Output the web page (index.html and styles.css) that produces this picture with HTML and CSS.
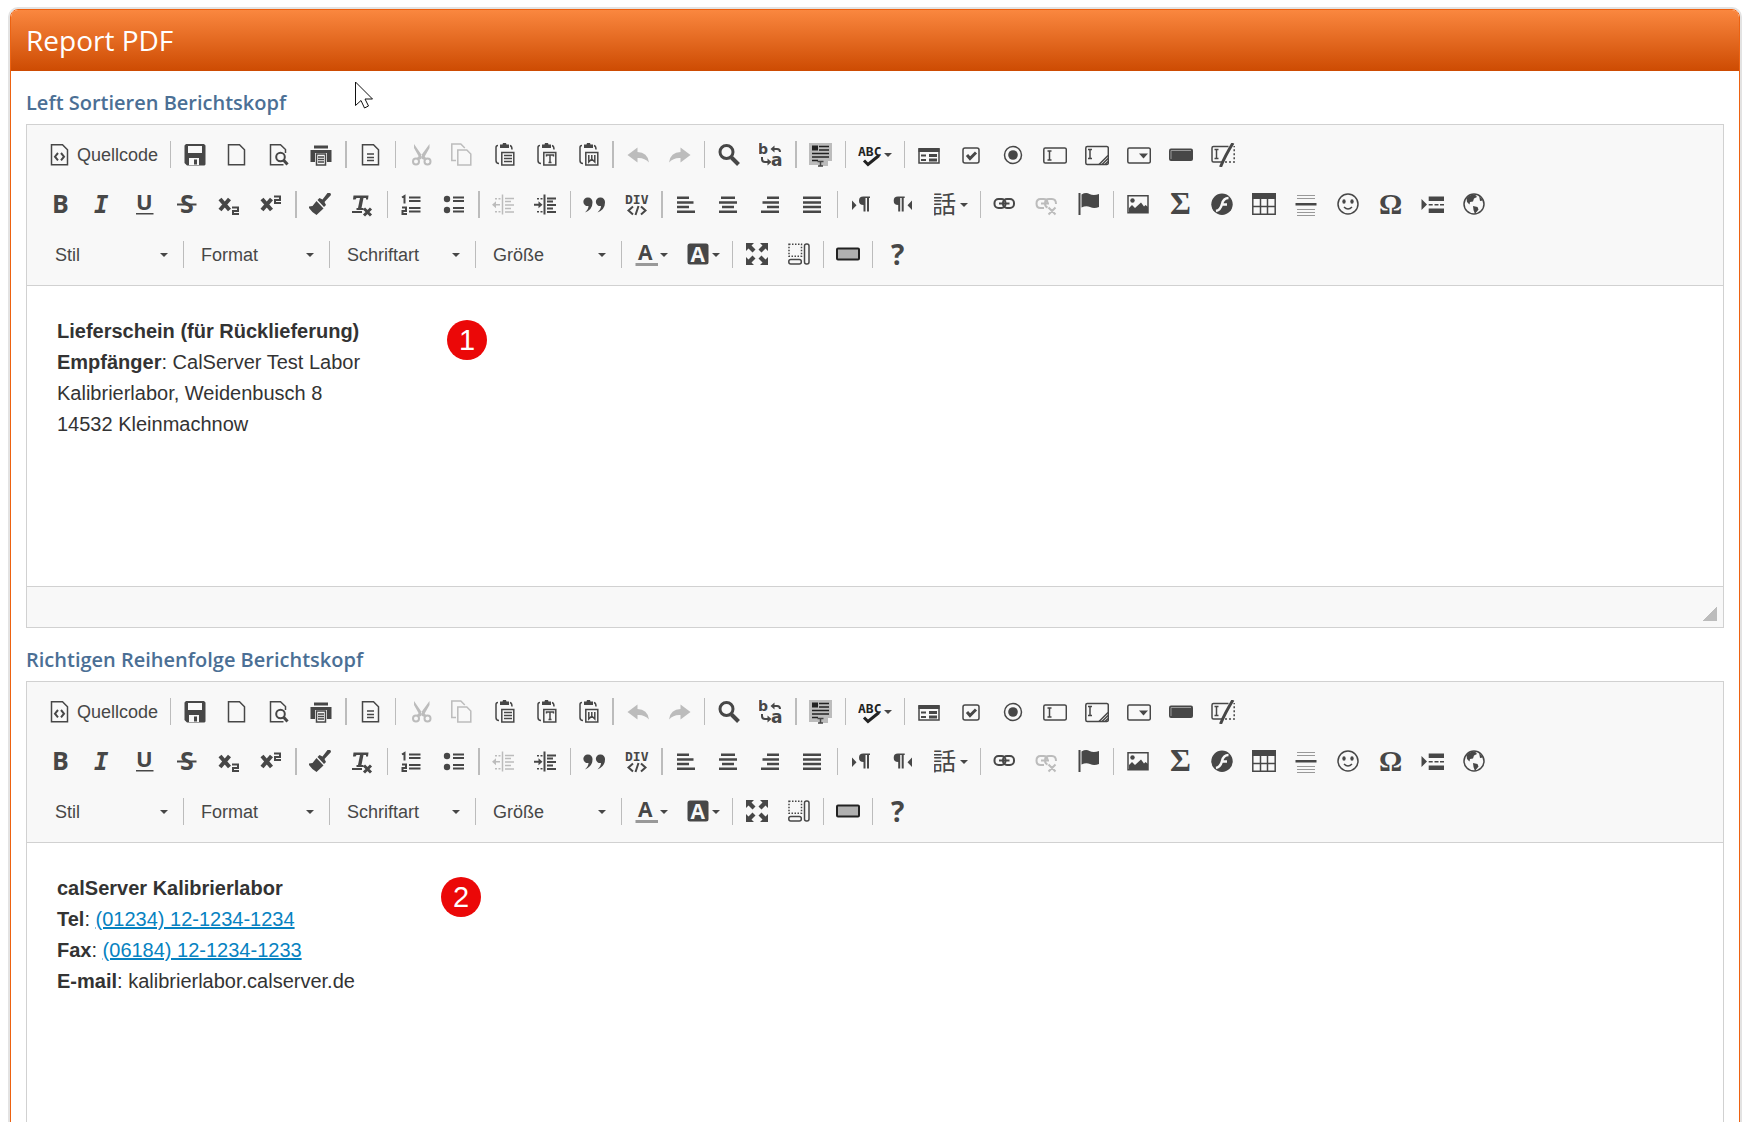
FILE: index.html
```html
<!DOCTYPE html>
<html lang="de">
<head>
    <meta charset="UTF-8">
    <meta name="viewport" content="width=device-width, initial-scale=1">
    <title>Report PDF</title>
    <link rel="stylesheet" href="styles.css">
</head>
<body>

    <!-- Icon sprite for the editor toolbar -->
    <svg class="sprite" aria-hidden="true">
        <symbol id="i-source" viewBox="0 0 24 24"><path class="line" d="M2.5 1.8h11l5 5v15h-16z"/><path class="line2" d="M9 10l-3 3.7 3 3.7M12 10l3 3.7-3 3.7"/></symbol>
        <symbol id="i-save" viewBox="0 0 24 24"><path fill-rule="evenodd" d="M3 1h18l1.5 1.5v19l-1 1H4l-2.5-2.5V2.5zM5 3v7h14V3zM6 15v7h10v-7z"/><path d="M11 16.5h3v5h-3z"/></symbol>
        <symbol id="i-new" viewBox="0 0 24 24"><path class="line" d="M3.5 1.8h11l5 5v15h-16z"/></symbol>
        <symbol id="i-preview" viewBox="0 0 24 24"><path class="line" d="M18.5 10V6.5l-5-4.7h-10v20h13"/><circle class="line2" cx="13.5" cy="14" r="4.3"/><path class="line3" d="M16.5 17l4 4.5"/></symbol>
        <symbol id="i-print" viewBox="0 0 24 24"><path d="M5 2.5h14v3H5zM1.5 7h21v12H18v-9H6v9H1.5z"/><path class="line" d="M7.5 11h9v11h-9zM9 14h6M9 16.5h6M9 19h6"/></symbol>
        <symbol id="i-templates" viewBox="0 0 24 24"><path class="line" d="M3.5 1.8h11l5 5v15h-16zM8 11h7M8 14.5h7M8 17.5h7"/></symbol>
        <symbol id="i-cut" viewBox="0 0 24 24"><path d="M6 1l9 13-2.5 2.5L6 5zM21.5 1l-9.500 13 3 2.5L21.5 5z"/><circle class="line2" cx="8" cy="18.5" r="3"/><circle class="line2" cx="19.5" cy="18.5" r="3"/><path class="line3" d="M10 16l3-3M17 16l-3-3"/></symbol>
        <symbol id="i-copy" viewBox="0 0 24 24"><path class="line" d="M6 17.5H1.8V1h9l4 4M7.8 7h9l4 4v11h-13z"/></symbol>
        <symbol id="i-paste" viewBox="0 0 24 24"><path class="line" d="M6 2.5q-2 0-2 2v13q0 3 3 3M18 2.5q2 .5 2 4"/><path d="M8 1.5h2.5L11 0h3l.5 1.5H17V5H8z"/><path class="line" d="M9.8 9.5h12v12.500h-12z"/><path class="line" d="M12 12.5h8M12 15.5h8M12 18.5h8"/></symbol>
        <symbol id="i-pastetext" viewBox="0 0 24 24"><path class="line" d="M6 2.5q-2 0-2 2v13q0 3 3 3M18 2.5q2 .5 2 4"/><path d="M8 1.5h2.5L11 0h3l.5 1.5H17V5H8z"/><path class="line" d="M9.8 9.5h12v12.5h-12z"/><path class="line" d="M12.5 13.5V12h7v1.5M16 12v7.5M14.5 19.5h3"/></symbol>
        <symbol id="i-pasteword" viewBox="0 0 24 24"><path class="line" d="M6 2.5q-2 0-2 2v13q0 3 3 3M18 2.5q2 .5 2 4"/><path d="M8 1.5h2.5L11 0h3l.5 1.5H17V5H8z"/><path class="line" d="M9.8 9.5h12v12.5h-12z"/><path class="line" d="M12.8 12v7l3-3 3 3v-7M15.8 12v4"/></symbol>
        <symbol id="i-undo" viewBox="0 0 24 24"><path d="M1.5 12L11.5 4.5V9q10 0 11.5 10.5-4.5-5-11.5-4.5v4.5z"/></symbol>
        <symbol id="i-redo" viewBox="0 0 24 24"><path d="M22.5 12L12.5 4.5V9Q2.5 9 1 19.5 5.5 14.5 12.5 15v4.5z"/></symbol>
        <symbol id="i-find" viewBox="0 0 24 24"><circle class="line3" cx="9.5" cy="9" r="6.5"/><path class="line4" d="M14.5 14.5l7 7"/></symbol>
        <symbol id="i-replace" viewBox="0 0 24 24"><text class="dv" x="-1" y="11" font-size="14" font-weight="bold">b</text><text class="dv" x="12" y="23" font-size="17" font-weight="bold">a</text><path class="line2" d="M14 6h4q3 0 3 3M3 14v2q0 3 3 3h3"/><path d="M11.5 6l4-3.5v7zM12.5 19l-4-3.5v7z"/></symbol>
        <symbol id="i-selectall" viewBox="0 0 24 24"><path fill="#bcbcbc" d="M0 0h23v18h-4v5h-9v-1H0z"/><path class="ink" d="M3 2.5h6v5H3z"/><path class="line dark" d="M10 3.5h10M10 7h10M3 10.5h17M3 14h17M3 17.5h6"/><path class="line" d="M8.5 18.5h6M11.5 18.5v4.5M9 23h5"/></symbol>
        <symbol id="i-spell" viewBox="0 0 24 24"><text class="mono bold ink" x="0" y="13" font-size="13">ABC</text><path class="line3 dark" d="M6 17.5l4 4 11-9"/></symbol>
        <symbol id="i-form" viewBox="0 0 24 24"><path class="line" d="M2 6h20v14H2z"/><path d="M1.500 5h21v4h-21zM12 11h8v3h-8zM12 15.5h8v3h-8z"/><path class="line2" d="M4 12.5h5M4 17h5"/></symbol>
        <symbol id="i-checkbox" viewBox="0 0 24 24"><rect class="line" x="4" y="5" width="16" height="15" rx="2"/><path class="line3" d="M8 12l3 3.5 6-6"/></symbol>
        <symbol id="i-radio" viewBox="0 0 24 24"><circle class="line" cx="12" cy="12" r="8.5"/><circle cx="12" cy="12" r="4.8"/></symbol>
        <symbol id="i-textfield" viewBox="0 0 24 24"><rect class="line" x=".8" y="5" width="22.5" height="15" rx="1.5"/><path class="line" d="M4.5 8h4M6.5 8v9M4.5 17h4"/></symbol>
        <symbol id="i-textarea" viewBox="0 0 24 24"><rect class="line" x=".8" y="3.5" width="22.5" height="18" rx="1.5"/><path class="line" d="M3 6.5h4M5 6.5v9M3 15.5h4M14 21.5l9-9M17 21.5l6-6M20 21.5l3-3"/></symbol>
        <symbol id="i-select" viewBox="0 0 24 24"><rect class="line" x=".8" y="5" width="22.5" height="15" rx="1.5"/><path d="M12 10.5h9l-4.5 5z"/></symbol>
        <symbol id="i-button" viewBox="0 0 24 24"><rect y="5.5" width="24" height="12.5" rx="2"/><path stroke="#999" fill="none" d="M2 16V7.5h20"/></symbol>
        <symbol id="i-hidden" viewBox="0 0 24 24"><path class="line" d="M12 19H2.5Q1 19 1 17.5V5q0-1.500 1.5-1.5h15"/><path class="line" d="M3.5 6.5h4M5.5 6.5v9M3.5 15.5h4"/><path class="line3" d="M9.5 24Q14 13 22 0"/><path class="line" stroke-dasharray="2 2" d="M14 19h9.2V3"/></symbol>

        <symbol id="i-bold" viewBox="0 0 24 24"><text class="os" x="3" y="20" font-size="25">B</text></symbol>
        <symbol id="i-italic" viewBox="0 0 24 24"><text class="mono bold" x="3" y="20" font-size="24" font-style="italic">I</text></symbol>
        <symbol id="i-underline" viewBox="0 0 24 24"><text class="os" x="3" y="17" font-size="22">U</text><path d="M3 20h17.500v1.500H3z"/></symbol>
        <symbol id="i-strike" viewBox="0 0 24 24"><text class="os" x="5" y="20" font-size="25">S</text><path d="M2 10.5h19.5v2H2z"/></symbol>
        <symbol id="i-sub" viewBox="0 0 24 24"><path class="line4" d="M3 6l9.5 11M12.5 6L3 17"/><path class="line2" d="M15 14.5h6V18h-5v3h6"/></symbol>
        <symbol id="i-sup" viewBox="0 0 24 24"><path class="line4" d="M3 6l9.5 11M12.5 6L3 17"/><path class="line2" d="M15 3.5h6V7h-5v3h6"/></symbol>
        <symbol id="i-copyformat" viewBox="0 0 24 24"><path d="M-1 13.5l4.500-.5L7.500 8l7 7.500-7 6.500q-5-2.500-8.500-8.500z"/><path d="M8.500 7l2-2 3 1.500L18.500 0q3-1.500 3.500 2L15.500 9l1.500 3-2 2z"/></symbol>
        <symbol id="i-removeformat" viewBox="0 0 24 24"><path d="M2.500 2.500h15l-.5 4h-2V5h-2.500l-2 10h2v2H5.500v-2h1.500L9 5H5.500L4.500 6.500H2z"/><path d="M1 18h10v2H1z"/><path class="line3" d="M13 15.5l7 7M20 15.5l-7 7"/></symbol>
        <symbol id="i-ol" viewBox="0 0 24 24"><path class="line2" d="M2 4.5L4.5 3v7.5M2 14.5h4V18H2.500v3H7M9 4.5h11.5M9 8h11.5M9 15h11.5M9 18.5h11.5"/></symbol>
        <symbol id="i-ul" viewBox="0 0 24 24"><circle cx="5" cy="6" r="3.2"/><circle cx="5" cy="17" r="3.2"/><path class="line2" d="M11 4.5h11M11 8h11M11 15h11M11 18.5h11"/></symbol>
        <symbol id="i-outdent" viewBox="0 0 24 24"><path class="line" d="M10.5 1.5v20M13 5.5h9M13 8.5h6M13 12h9M13 15.5h6M13 19h9M2 11.7h6"/><path d="M0 11.7l4-3.5v7zM3 5h2v1.5H3zM6.5 5h2v1.5h-2zM3 18h2v1.5H3zM6.5 18h2v1.5h-2z"/></symbol>
        <symbol id="i-indent" viewBox="0 0 24 24"><path class="line2" d="M10.5 1.5v20"/><path class="line2" d="M13 5.5h9M13 8.5h6M13 12h9M13 15.5h6M13 19h9M0 11.7h6"/><path d="M8.5 11.7l-4-3.5v7zM3 5h2v1.5H3zM6.5 5h2v1.5h-2zM3 18h2v1.5H3zM6.5 18h2v1.5h-2z"/></symbol>
        <symbol id="i-quote" viewBox="0 0 24 24"><path d="M5 4.5a4.500 4.500 0 0 1 4.500 5q0 7-7.500 10 3.500-3.500 3.500-6.500a4.300 4.300 0 1 1-.5-8.500zM17.500 4.500a4.500 4.500 0 0 1 4.500 5q0 7-7.500 10 3.500-3.500 3.500-6.500a4.300 4.300 0 1 1-.5-8.500z"/></symbol>
        <symbol id="i-div" viewBox="0 0 24 24"><text class="mono bold" x="0" y="10.5" font-size="13">DIV</text><path class="line2" d="M8 13.5l-4.5 4 4.5 4M16 13.5l4.5 4-4.5 4M13.5 13l-3 9"/></symbol>
        <symbol id="i-left" viewBox="0 0 24 24"><path d="M2 3.5h12V6H2zM2 8.2h16.500v2.500H2zM2 12.700h12v2.500H2zM2 17.500h18V20H2z"/></symbol>
        <symbol id="i-center" viewBox="0 0 24 24"><path d="M4 3.5h14V6H4zM2 8.2h18v2.500H2zM5 12.700h12v2.500H5zM2 17.500h18V20H2z"/></symbol>
        <symbol id="i-right" viewBox="0 0 24 24"><path d="M8 3.5h12V6H8zM3.500 8.200H20v2.500H3.500zM8 12.700h12v2.500H8zM2 17.500h18V20H2z"/></symbol>
        <symbol id="i-justify" viewBox="0 0 24 24"><path d="M2 3.5h18V6H2zM2 8.2h18v2.500H2zM2 12.700h18v2.500H2zM2 17.500h18V20H2z"/></symbol>
        <symbol id="i-ltr" viewBox="0 0 24 24"><path d="M2 7.5l4.5 4.7L2 17z"/><path d="M20 3.5V5h-1v13.5h-2V5h-1.5v13.5h-2V12Q9 12 9 7.7t4.5-4.2z"/></symbol>
        <symbol id="i-rtl" viewBox="0 0 24 24"><path d="M20 7.5l-4.5 4.7L20 17z"/><path d="M12.7 3.5V5h-1v13.5h-2V5H8.2v13.5h-2V12q-4.5 0-4.5-4.3t4.5-4.2z"/></symbol>
        <symbol id="i-lang" viewBox="0 0 24 24"><text class="cjk" x="-2" y="20" font-size="24">話</text></symbol>
        <symbol id="i-link" viewBox="0 0 24 24"><rect class="line2" x="1.5" y="6" width="11" height="9" rx="4"/><rect class="line2" x="10" y="6" width="11" height="9" rx="4"/><path class="line2" d="M6 10.5h10.5"/></symbol>
        <symbol id="i-unlink" viewBox="0 0 24 24"><path class="line2" d="M9 15H5.5q-4 0-4-4.5T5.5 6h3q4 0 4 4.5M12.5 14.5q-2.5-1-2.5-4Q10 6 14 6h3q4 0 4 5M6 10.5h8M13.5 14.5l7 7M20.5 14.5l-7 7"/></symbol>
        <symbol id="i-anchor" viewBox="0 0 24 24"><path d="M1.5 0h2v22h-2zM4.5 1.5Q9-1 12.5 1q4 2 9.5 0v13q-5 2-9 0-4-1.5-8.5.5z"/></symbol>
        <symbol id="i-image" viewBox="0 0 24 24"><path class="line" d="M2 2.8h20v17H2z"/><circle cx="6.5" cy="7.5" r="2.2"/><path d="M3 19v-4l3-3 3 3 6-5.5 3 4 1.5-1.5L22 14v5z"/></symbol>
        <symbol id="i-math" viewBox="0 0 24 24"><text class="serif" x="2" y="21" font-size="32">Σ</text></symbol>
        <symbol id="i-flash" viewBox="0 0 24 24"><circle cx="12" cy="11.3" r="10.7"/><path fill="none" stroke="#f8f8f8" stroke-width="2.5" d="M18.5 5q-5 0-6.5 6-1.5 6-6 7M11 11.5h6"/></symbol>
        <symbol id="i-table" viewBox="0 0 24 24"><path d="M0 0h24v6H0z"/><path class="line" d="M.8 5v16.2h22.4V5M.8 13.5h22.4M8.5 5v16M15.5 5v16"/></symbol>
        <symbol id="i-hr" viewBox="0 0 24 24"><path stroke="#999" d="M3-.5h18M3 2.5h18M3 5.5h18M3 16.5h18M3 19.5h18M3 22.5h18"/><path d="M1.5 10h21v2.500h-21z"/></symbol>
        <symbol id="i-smiley" viewBox="0 0 24 24"><circle class="line" cx="12" cy="11" r="10"/><ellipse cx="8" cy="8.5" rx="1.7" ry="2.2"/><ellipse cx="16" cy="8.5" rx="1.7" ry="2.2"/><path class="line" d="M8 14q4 4 8 0"/></symbol>
        <symbol id="i-omega" viewBox="0 0 24 24"><text class="serif" x="1" y="21" font-size="29">Ω</text></symbol>
        <symbol id="i-pagebreak" viewBox="0 0 24 24"><path d="M1.5 6l5.5 5.5L1.5 17zM8.700 3.500H24V8H8.700zM8.700 15.500H24V20H8.700zM8.700 11h4v1.500h-4zM14.500 11h4v1.500h-4zM20 11h4v1.500h-4z"/></symbol>
        <symbol id="i-globe" viewBox="0 0 24 24"><circle class="line" cx="12" cy="11" r="10"/><path d="M4.5 5Q8 1 13 1.5l2 2.5-3 1.5-1 3-3 .5-.5 2.5L5 9zM11 13l4.5 1 1 2.5-3.5 4.5-1.5-4zM17 2.5l4 5-3 .5z"/></symbol>

        <symbol id="i-textcolor" viewBox="0 0 24 24"><text class="os" x="4" y="17" font-size="21">A</text><path fill="#999" d="M1.5 20H24v3H1.5z"/></symbol>
        <symbol id="i-bgcolor" viewBox="0 0 24 24"><rect x="1.5" y=".5" width="21" height="21" rx="2.5"/><text class="os light" x="4.5" y="18.5" font-size="21">A</text></symbol>
        <symbol id="i-maximize" viewBox="0 0 24 24"><path d="M1 0h8L6.5 2.5l4 4-3 3-4-4L1 8zM23 0v8l-2.5-2.5-4 4-3-3 4-4L15 0zM1 22v-8l2.5 2.5 4-4 3 3-4 4L9 22zM23 22h-8l2.5-2.5-4-4 3-3 4 4L23 14z"/></symbol>
        <symbol id="i-blocks" viewBox="0 0 24 24"><path class="line" stroke-dasharray="1.5 1.5" d="M2 1.2h12.5v12H2z"/><rect class="line" x="17.5" y="1" width="4.5" height="20" rx="2"/><rect class="line" x="1.8" y="16.5" width="12.5" height="4.5" rx="2"/></symbol>
        <symbol id="i-box" viewBox="0 0 24 24"><rect x="1" y="5.5" width="22" height="11" rx="1" fill="#b0b0b0" stroke="#222" stroke-width="2"/></symbol>
        <symbol id="i-about" viewBox="0 0 24 24"><text class="os" x="6" y="21.5" font-size="28">?</text></symbol>
    </svg>

    <!-- One toolbar, used by every editor on the page -->
    <template id="toolbarTemplate">
        <div class="row">
            <button type="button" class="btn source"><svg><use href="#i-source"/></svg><span>Quellcode</span></button>
            <i class="sep"></i>
            <button type="button" class="btn" aria-label="Speichern"><svg><use href="#i-save"/></svg></button>
            <button type="button" class="btn" aria-label="Neue Seite"><svg><use href="#i-new"/></svg></button>
            <button type="button" class="btn" aria-label="Vorschau"><svg><use href="#i-preview"/></svg></button>
            <button type="button" class="btn" aria-label="Drucken"><svg><use href="#i-print"/></svg></button>
            <i class="sep wide"></i>
            <button type="button" class="btn" aria-label="Vorlagen"><svg><use href="#i-templates"/></svg></button>
            <i class="sep"></i>
            <button type="button" class="btn" disabled aria-label="Ausschneiden"><svg><use href="#i-cut"/></svg></button>
            <button type="button" class="btn" disabled aria-label="Kopieren"><svg><use href="#i-copy"/></svg></button>
            <button type="button" class="btn" aria-label="Einfügen"><svg><use href="#i-paste"/></svg></button>
            <button type="button" class="btn" aria-label="Als Klartext einfügen"><svg><use href="#i-pastetext"/></svg></button>
            <button type="button" class="btn" aria-label="Aus Word einfügen"><svg><use href="#i-pasteword"/></svg></button>
            <i class="sep wide"></i>
            <button type="button" class="btn" disabled aria-label="Rückgängig"><svg><use href="#i-undo"/></svg></button>
            <button type="button" class="btn" disabled aria-label="Wiederherstellen"><svg><use href="#i-redo"/></svg></button>
            <i class="sep"></i>
            <button type="button" class="btn" aria-label="Suchen"><svg><use href="#i-find"/></svg></button>
            <button type="button" class="btn" aria-label="Ersetzen"><svg><use href="#i-replace"/></svg></button>
            <i class="sep wide"></i>
            <button type="button" class="btn" aria-label="Alles auswählen"><svg><use href="#i-selectall"/></svg></button>
            <i class="sep"></i>
            <button type="button" class="btn menu" aria-label="Rechtschreibprüfung"><svg><use href="#i-spell"/></svg></button>
            <i class="sep"></i>
            <button type="button" class="btn" aria-label="Formular"><svg><use href="#i-form"/></svg></button>
            <button type="button" class="btn" aria-label="Kontrollbox"><svg><use href="#i-checkbox"/></svg></button>
            <button type="button" class="btn" aria-label="Optionsfeld"><svg><use href="#i-radio"/></svg></button>
            <button type="button" class="btn" aria-label="Textfeld"><svg><use href="#i-textfield"/></svg></button>
            <button type="button" class="btn" aria-label="Textbereich"><svg><use href="#i-textarea"/></svg></button>
            <button type="button" class="btn" aria-label="Auswahlfeld"><svg><use href="#i-select"/></svg></button>
            <button type="button" class="btn" aria-label="Schaltfläche"><svg><use href="#i-button"/></svg></button>
            <button type="button" class="btn" aria-label="Verstecktes Feld"><svg><use href="#i-hidden"/></svg></button>
        </div>
        <div class="row">
            <button type="button" class="btn" aria-label="Fett"><svg><use href="#i-bold"/></svg></button>
            <button type="button" class="btn" aria-label="Kursiv"><svg><use href="#i-italic"/></svg></button>
            <button type="button" class="btn" aria-label="Unterstrichen"><svg><use href="#i-underline"/></svg></button>
            <button type="button" class="btn" aria-label="Durchgestrichen"><svg><use href="#i-strike"/></svg></button>
            <button type="button" class="btn" aria-label="Tiefgestellt"><svg><use href="#i-sub"/></svg></button>
            <button type="button" class="btn" aria-label="Hochgestellt"><svg><use href="#i-sup"/></svg></button>
            <i class="sep wide"></i>
            <button type="button" class="btn" aria-label="Formatierung kopieren"><svg><use href="#i-copyformat"/></svg></button>
            <button type="button" class="btn" aria-label="Formatierung entfernen"><svg><use href="#i-removeformat"/></svg></button>
            <i class="sep"></i>
            <button type="button" class="btn" aria-label="Nummerierte Liste"><svg><use href="#i-ol"/></svg></button>
            <button type="button" class="btn" aria-label="Liste"><svg><use href="#i-ul"/></svg></button>
            <i class="sep wide"></i>
            <button type="button" class="btn" disabled aria-label="Einzug verringern"><svg><use href="#i-outdent"/></svg></button>
            <button type="button" class="btn" aria-label="Einzug erhöhen"><svg><use href="#i-indent"/></svg></button>
            <i class="sep"></i>
            <button type="button" class="btn" aria-label="Zitatblock"><svg><use href="#i-quote"/></svg></button>
            <button type="button" class="btn" aria-label="DIV Container erzeugen"><svg><use href="#i-div"/></svg></button>
            <i class="sep wide"></i>
            <button type="button" class="btn" aria-label="Linksbündig"><svg><use href="#i-left"/></svg></button>
            <button type="button" class="btn" aria-label="Zentriert"><svg><use href="#i-center"/></svg></button>
            <button type="button" class="btn" aria-label="Rechtsbündig"><svg><use href="#i-right"/></svg></button>
            <button type="button" class="btn" aria-label="Blocksatz"><svg><use href="#i-justify"/></svg></button>
            <i class="sep"></i>
            <button type="button" class="btn" aria-label="Leserichtung von links nach rechts"><svg><use href="#i-ltr"/></svg></button>
            <button type="button" class="btn" aria-label="Leserichtung von rechts nach links"><svg><use href="#i-rtl"/></svg></button>
            <button type="button" class="btn menu" aria-label="Sprache"><svg><use href="#i-lang"/></svg></button>
            <i class="sep"></i>
            <button type="button" class="btn" aria-label="Link einfügen"><svg><use href="#i-link"/></svg></button>
            <button type="button" class="btn" disabled aria-label="Link entfernen"><svg><use href="#i-unlink"/></svg></button>
            <button type="button" class="btn" aria-label="Anker einfügen"><svg><use href="#i-anchor"/></svg></button>
            <i class="sep"></i>
            <button type="button" class="btn" aria-label="Bild"><svg><use href="#i-image"/></svg></button>
            <button type="button" class="btn" aria-label="Mathematik"><svg><use href="#i-math"/></svg></button>
            <button type="button" class="btn" aria-label="Flash"><svg><use href="#i-flash"/></svg></button>
            <button type="button" class="btn" aria-label="Tabelle"><svg><use href="#i-table"/></svg></button>
            <button type="button" class="btn" aria-label="Horizontale Linie"><svg><use href="#i-hr"/></svg></button>
            <button type="button" class="btn" aria-label="Smiley"><svg><use href="#i-smiley"/></svg></button>
            <button type="button" class="btn" aria-label="Sonderzeichen"><svg><use href="#i-omega"/></svg></button>
            <button type="button" class="btn" aria-label="Seitenumbruch"><svg><use href="#i-pagebreak"/></svg></button>
            <button type="button" class="btn" aria-label="IFrame"><svg><use href="#i-globe"/></svg></button>
        </div>
        <div class="row combos">
            <label class="combo"><select aria-label="Stil"><option>Stil</option></select></label>
            <i class="sep"></i>
            <label class="combo"><select aria-label="Format"><option>Format</option></select></label>
            <i class="sep"></i>
            <label class="combo"><select aria-label="Schriftart"><option>Schriftart</option></select></label>
            <i class="sep"></i>
            <label class="combo"><select aria-label="Größe"><option>Größe</option></select></label>
            <i class="sep"></i>
            <button type="button" class="btn menu" aria-label="Textfarbe"><svg><use href="#i-textcolor"/></svg></button>
            <button type="button" class="btn menu" aria-label="Hintergrundfarbe"><svg><use href="#i-bgcolor"/></svg></button>
            <i class="sep"></i>
            <button type="button" class="btn" aria-label="Maximieren"><svg><use href="#i-maximize"/></svg></button>
            <button type="button" class="btn" aria-label="Blöcke anzeigen"><svg><use href="#i-blocks"/></svg></button>
            <i class="sep"></i>
            <button type="button" class="btn" aria-label="Platzhalter"><svg><use href="#i-box"/></svg></button>
            <i class="sep"></i>
            <button type="button" class="btn" aria-label="Über den Editor"><svg><use href="#i-about"/></svg></button>
        </div>
    </template>

    <main class="panel">
        <h1 class="panel-header">Report PDF</h1>
        <div class="panel-body">

            <h2 class="field-label">Left Sortieren Berichtskopf</h2>
            <div class="editor">
                <div class="toolbar"></div>
                <div class="content">
                    <p>
                        <strong>Lieferschein (für Rücklieferung)</strong><br>
                        <strong>Empfänger</strong>: CalServer Test Labor<br>
                        Kalibrierlabor, Weidenbusch 8<br>
                        14532 Kleinmachnow
                    </p>
                    <span class="badge badge-one">1</span>
                </div>
                <div class="statusbar"><span class="resizer"></span></div>
            </div>

            <h2 class="field-label">Richtigen Reihenfolge Berichtskopf</h2>
            <div class="editor">
                <div class="toolbar"></div>
                <div class="content">
                    <p>
                        <strong>calServer Kalibrierlabor</strong><br>
                        <strong>Tel</strong>: <a href="tel:012341212341234">(01234) 12-1234-1234</a><br>
                        <strong>Fax</strong>: <a href="tel:061841212341233">(06184) 12-1234-1233</a><br>
                        <strong>E-mail</strong>: kalibrierlabor.calserver.de
                    </p>
                    <span class="badge badge-two">2</span>
                </div>
                <div class="statusbar"><span class="resizer"></span></div>
            </div>

        </div>
    </main>

    <!-- Mouse pointer -->
    <svg class="pointer" viewBox="0 0 19 28" aria-hidden="true"><path d="M.5 1v23.5l5.500-5 3.500 7.500 4-2-3.500-7h7.500z"/></svg>

    <script>
        // Put a copy of the toolbar in each editor
        const template = document.getElementById('toolbarTemplate');
        document.querySelectorAll('.toolbar').forEach(toolbar => {
            toolbar.appendChild(template.content.cloneNode(true));
        });
    </script>
</body>
</html>
```
FILE: styles.css
```css
* {
    box-sizing: border-box;
}

body {
    height: 100vh;
    margin: 0;
    padding: 9px 14px 0 10px;
    overflow: hidden;
    background-color: #fff;
    color: #333;
    font-family: "Liberation Sans", Arial, sans-serif;
}

.sprite {
    display: none;
}

/* Panel */
.panel {
    border: 1px solid #ed6211;
    border-radius: 8px 8px 0 0;
    box-shadow: 0 0 0 2px #e3e3e3;
}

.panel-header {
    margin: 0;
    padding: 0 15px;
    border-radius: 7px 7px 0 0;
    background: linear-gradient(#fa873f, #cd4b02);
    color: #fff;
    font: 400 28px/61px "Open Sans", "Segoe UI", sans-serif;
}

.panel-body {
    padding: 0 15px;
}

.field-label {
    margin: 0;
    padding: 17px 0 6px;
    color: #4b6f95;
    font: 600 20px/30px "Open Sans", "Segoe UI", sans-serif;
}

/* Editor */
.editor {
    border: 1px solid #d1d1d1;
}

.toolbar {
    display: flex;
    flex-direction: column;
    gap: 22px;
    padding: 16px 13px;
    border-bottom: 1px solid #d1d1d1;
    background-color: #f8f8f8;
}

.row {
    display: flex;
    height: 28px;
}

.combos {
    padding-left: 1px;
}

.btn {
    display: flex;
    align-items: center;
    padding: 0 9px;
    border: 0;
    background: none;
    color: #474747;
    font: 18px "Liberation Sans", Arial, sans-serif;
    cursor: pointer;
}

.btn:disabled {
    color: #bcbcbc;
    cursor: default;
}

.btn svg {
    flex: none;
    width: 24px;
    height: 24px;
    fill: currentColor;
    overflow: visible;
}

.btn symbol {
    overflow: visible;
}

.source {
    width: 127px;
    gap: 4px;
}

.menu {
    gap: 2px;
    width: 52px;
}

.menu::after,
.combo::after {
    content: "";
    border: 4px solid transparent;
    border-top-color: #474747;
    border-bottom: 0;
}

.sep {
    flex: none;
    width: 1px;
    height: 27px;
    margin: 0 3px;
    background-color: #bcbcbc;
}

.sep.wide {
    width: 2px;
}

.combo {
    display: flex;
    align-items: center;
    width: 139px;
    padding: 0 12px 0 14px;
}

.combo select {
    flex: 1;
    padding: 0;
    border: 0;
    appearance: none;
    background: none;
    color: #474747;
    font: 18px "Liberation Sans", Arial, sans-serif;
}

.content {
    position: relative;
    min-height: 300px;
    padding: 30px;
    background-color: #fff;
    font-size: 20px;
    line-height: 31px;
}

.content p {
    margin: 0;
}

.content a {
    color: #0782c1;
}

.badge {
    position: absolute;
    top: 34px;
    width: 40px;
    height: 40px;
    border-radius: 50%;
    background-color: #eb0808;
    color: #fff;
    font-size: 29px;
    line-height: 41px;
    text-align: center;
}

.badge-one {
    left: 420px;
}

.badge-two {
    left: 414px;
}

.statusbar {
    display: flex;
    align-items: flex-end;
    justify-content: flex-end;
    height: 41px;
    padding: 6px;
    border-top: 1px solid #d1d1d1;
    background-color: #f8f8f8;
}

.resizer {
    width: 15px;
    height: 15px;
    background: linear-gradient(135deg, transparent 50%, #bcbcbc 50%);
}

.pointer {
    position: absolute;
    top: 81px;
    left: 355px;
    width: 19px;
    height: 28px;
    fill: #fff;
    stroke: #111;
}

/* Icon strokes */
.line, .line2, .line3, .line4 {
    fill: none;
    stroke: currentColor;
    stroke-width: 1.5;
}

.line2 {
    stroke-width: 2;
}

.line3 {
    stroke-width: 3;
}

.line4 {
    stroke-width: 4;
}

.dark {
    stroke: #222;
}

.ink {
    fill: #222;
}

/* Icon letters */
.os {
    font-family: "Open Sans", sans-serif;
    font-weight: 700;
}

.dv {
    font-family: "DejaVu Sans", sans-serif;
}

.mono {
    font-family: "DejaVu Sans Mono", monospace;
}

.mono.bold {
    font-weight: 700;
}

.serif {
    font-family: "Liberation Serif", serif;
    font-weight: 700;
}

.cjk {
    font-family: "Noto Sans CJK JP", sans-serif;
}

.light {
    fill: #f8f8f8;
}
```
